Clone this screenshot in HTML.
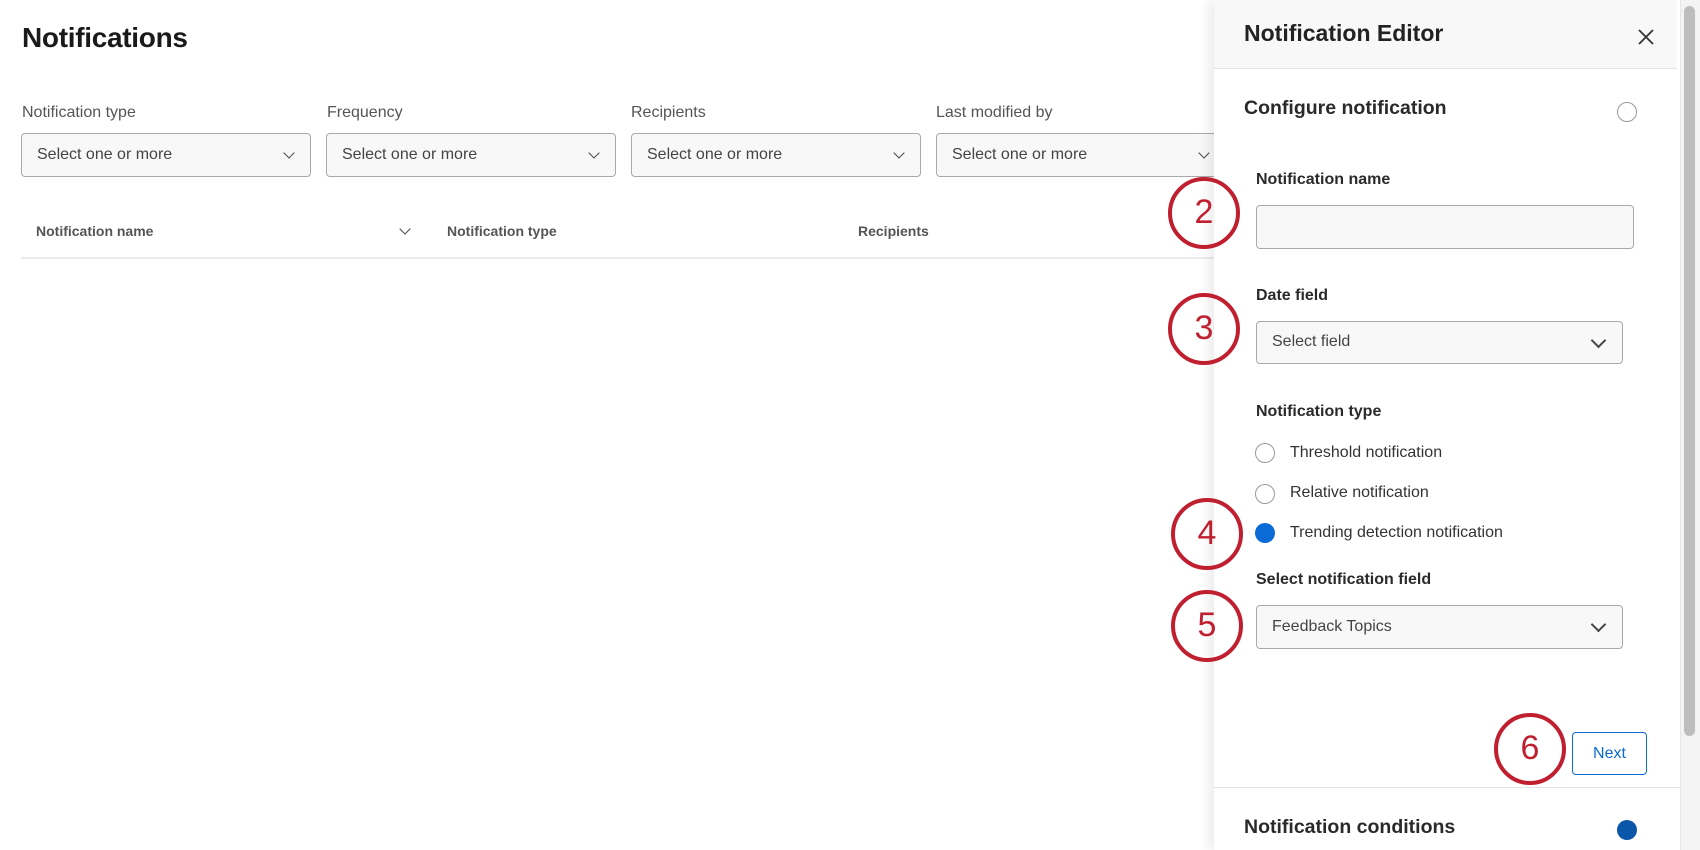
<!DOCTYPE html>
<html><head><meta charset="utf-8"><style>
*{box-sizing:border-box;margin:0;padding:0}
body{width:1700px;height:850px;overflow:hidden;background:#fff;font-family:"Liberation Sans",sans-serif;color:#222;position:relative}
.a{position:absolute}
h1{position:absolute;left:22px;top:22px;font-size:28px;font-weight:bold;color:#1a1a1a;letter-spacing:-0.3px}
.lbl{position:absolute;top:104px;font-size:16px;color:#555}
.dd{position:absolute;top:133px;width:290px;height:44px;border:1px solid #a9a9a9;border-radius:4px;background:#f8f8f8;font-size:16px;color:#444;padding:12px 15px}
.chev{position:absolute;width:8px;height:8px;border-right:1.5px solid #444;border-bottom:1.5px solid #444;transform:rotate(45deg)}
.th{position:absolute;top:223px;font-size:14px;font-weight:bold;color:#555}
.panel{position:absolute;left:1214px;top:0;width:486px;height:850px;background:#fff;box-shadow:-6px 0 10px rgba(0,0,0,0.07)}
.ph{position:absolute;left:0;top:0;width:463px;height:69px;background:#f8f8f8;border-bottom:1px solid #e2e2e2}
.b{position:absolute;font-weight:bold;color:#2a2a2a}
.field{position:absolute;border:1px solid #a9a9a9;border-radius:4px;background:#f8f8f8;font-size:16px;color:#444;padding:11px 15px}
.radio{position:absolute;left:1255px;width:20px;height:20px;border-radius:50%;border:1px solid #999;background:#fff}
.rl{position:absolute;left:1290px;font-size:16px;color:#333}
.red{position:absolute;width:72px;height:72px;border:4.5px solid #c01f2f;border-radius:50%;color:#c01f2f;font-size:34px;text-align:center;line-height:62px}
</style></head><body>
<h1>Notifications</h1>
<div class="lbl" style="left:22px">Notification type</div>
<div class="lbl" style="left:327px">Frequency</div>
<div class="lbl" style="left:631px">Recipients</div>
<div class="lbl" style="left:936px">Last modified by</div>
<div class="dd" style="left:21px">Select one or more<div class="chev" style="right:17px;top:15px"></div></div>
<div class="dd" style="left:326px">Select one or more<div class="chev" style="right:17px;top:15px"></div></div>
<div class="dd" style="left:631px">Select one or more<div class="chev" style="right:17px;top:15px"></div></div>
<div class="dd" style="left:936px">Select one or more<div class="chev" style="right:17px;top:15px"></div></div>
<div class="th" style="left:36px">Notification name</div>
<div class="chev" style="left:401px;top:225px"></div>
<div class="th" style="left:447px">Notification type</div>
<div class="th" style="left:858px">Recipients</div>
<div class="a" style="left:21px;top:257px;width:1200px;height:2px;background:#ececec"></div>

<div class="panel">
 <div class="ph"></div>
 <div class="a" style="right:0;top:0;width:20px;height:850px;background:#f3f3f3;border-left:1px solid #e6e6e6"></div>
 <div class="a" style="right:5px;top:6px;width:11px;height:730px;border-radius:6px;background:#bdbdbd"></div>
 <div class="a" style="left:0;top:787px;width:466px;height:1px;background:#e2e2e2"></div>
</div>
<div class="b" style="left:1244px;top:20px;font-size:23px;color:#222">Notification Editor</div>
<svg class="a" style="left:1637px;top:28px" width="18" height="18"><path d="M2 2L16 16M16 2L2 16" stroke="#333" stroke-width="1.8"/></svg>
<div class="b" style="left:1244px;top:97px;font-size:19.5px">Configure notification</div>
<div class="a" style="left:1617px;top:102px;width:20px;height:20px;border-radius:50%;border:1px solid #999"></div>
<div class="b" style="left:1256px;top:171px;font-size:16px">Notification name</div>
<div class="field" style="left:1256px;top:205px;width:378px;height:44px"></div>
<div class="b" style="left:1256px;top:287px;font-size:16px">Date field</div>
<div class="field" style="left:1256px;top:321px;width:367px;height:43px">Select field<div class="chev" style="right:18px;top:13px;width:11px;height:11px;border-width:2px"></div></div>
<div class="b" style="left:1256px;top:403px;font-size:16px">Notification type</div>
<div class="radio" style="top:443px"></div><div class="rl" style="top:444px">Threshold notification</div>
<div class="radio" style="top:484px"></div><div class="rl" style="top:484px">Relative notification</div>
<div class="radio" style="top:523px;border:none;background:#0b6bd6"></div><div class="rl" style="top:524px">Trending detection notification</div>
<div class="b" style="left:1256px;top:571px;font-size:16px">Select notification field</div>
<div class="field" style="left:1256px;top:605px;width:367px;height:44px;padding-top:12px">Feedback Topics<div class="chev" style="right:18px;top:13px;width:11px;height:11px;border-width:2px"></div></div>
<div class="a" style="left:1572px;top:732px;width:75px;height:43px;border:1px solid #0b6bd6;border-radius:4px;color:#0b6bd6;font-size:16px;text-align:center;line-height:41px">Next</div>
<div class="b" style="left:1244px;top:816px;font-size:19.5px">Notification conditions</div>
<div class="a" style="left:1617px;top:820px;width:20px;height:20px;border-radius:50%;background:#0a56a8"></div>

<div class="red" style="left:1168px;top:177px">2</div>
<div class="red" style="left:1168px;top:293px">3</div>
<div class="red" style="left:1171px;top:498px">4</div>
<div class="red" style="left:1171px;top:590px">5</div>
<div class="red" style="left:1494px;top:713px">6</div>
</body></html>
